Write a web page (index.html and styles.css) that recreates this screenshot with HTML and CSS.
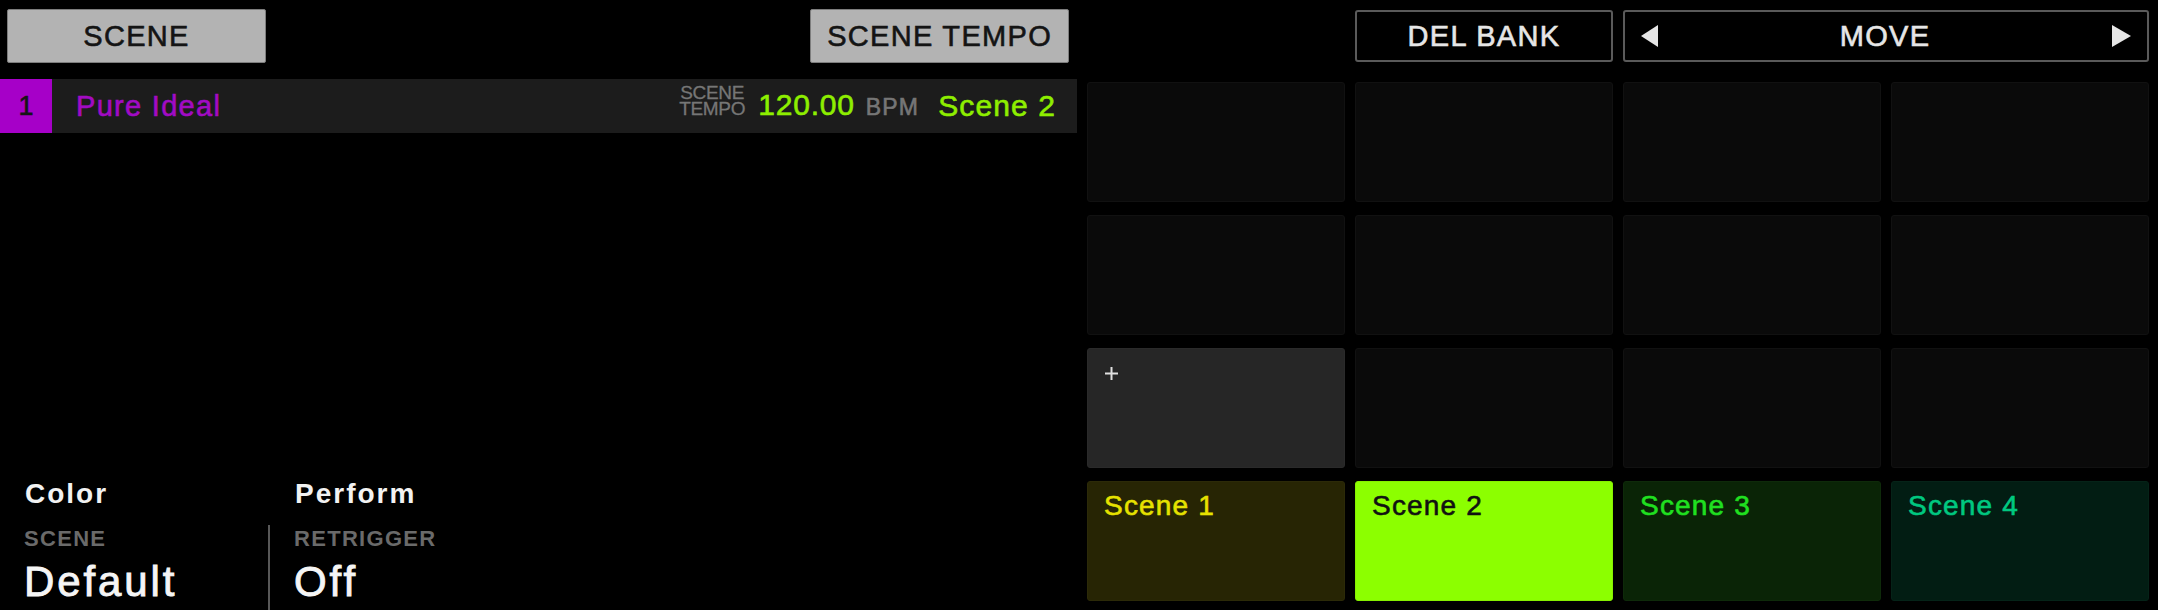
FILE: index.html
```html
<!DOCTYPE html>
<html>
<head>
<meta charset="utf-8">
<link rel="stylesheet" href="styles.css">
</head>
<body>
<div class="screen">

  <div class="left">
    <div class="left-head">
      <div class="btn btn-on">SCENE</div>
      <div class="btn btn-on tempo-btn">SCENE TEMPO</div>
    </div>

    <div class="scene-row">
      <span class="scene-num">1</span>
      <span class="scene-name">Pure Ideal</span>
      <span class="tempo-label"><span>SCENE</span><span>TEMPO</span></span>
      <span class="tempo">120.00<span class="bpm">BPM</span></span>
      <span class="scene-link">Scene 2</span>
    </div>

    <div class="params">
      <div class="param-col">
        <h3>Color</h3>
        <div class="param">
          <div class="param-label">SCENE</div>
          <div class="param-value">Default</div>
        </div>
      </div>
      <div class="param-col second">
        <h3>Perform</h3>
        <div class="param">
          <div class="param-label">RETRIGGER</div>
          <div class="param-value">Off</div>
        </div>
      </div>
    </div>
  </div>

  <div class="right">
    <div class="right-head">
      <div class="btn btn-line del">DEL BANK</div>
      <div class="btn btn-line move">
        <svg width="17" height="22" viewBox="0 0 17 22"><polygon points="17,0 17,22 0,11" fill="#e6e6e6"/></svg>
        <span class="move-text">MOVE</span>
        <svg width="19" height="22" viewBox="0 0 19 22"><polygon points="0,0 0,22 19,11" fill="#e6e6e6"/></svg>
      </div>
    </div>

    <div class="pads">
      <div class="pad"></div>
      <div class="pad"></div>
      <div class="pad"></div>
      <div class="pad"></div>

      <div class="pad"></div>
      <div class="pad"></div>
      <div class="pad"></div>
      <div class="pad"></div>

      <div class="pad pad-add">
        <svg width="15" height="15" viewBox="0 0 15 15"><path d="M7.5 1 V14 M1 7.5 H14" stroke="#e0e0e0" stroke-width="2"/></svg>
      </div>
      <div class="pad"></div>
      <div class="pad"></div>
      <div class="pad"></div>

      <div class="pad scene1">Scene 1</div>
      <div class="pad scene2">Scene 2</div>
      <div class="pad scene3">Scene 3</div>
      <div class="pad scene4">Scene 4</div>
    </div>
  </div>

</div>
</body>
</html>
```

FILE: styles.css
```css
body {
    margin: 0;
    background-color: #000;
    font-family: "Liberation Sans", Arial, sans-serif;
    overflow: hidden;
}
.screen {
    display: flex;
    width: 2158px;
    height: 610px;
    -webkit-text-stroke: 0.6px currentColor;
}

/* left side */
.left {
    width: 1077px;
    display: flex;
    flex-direction: column;
}
.left-head {
    display: grid;
    grid-template-columns: repeat(4, 259px);
    column-gap: 8.7px;
    padding: 9px 0 0 7px;
}
.btn {
    box-sizing: border-box;
    display: flex;
    align-items: center;
    justify-content: center;
    font-size: 29px;
    letter-spacing: 1.3px;
}
.btn-on {
    height: 54px;
    background-color: #b3b3b3;
    border: 1px solid #7d7d7d;
    border-radius: 2px;
    color: #141414;
}
.tempo-btn {
    grid-column: 4;
}
.scene-row {
    display: flex;
    align-items: center;
    height: 54px;
    margin-top: 16px;
    padding-right: 21px;
    background-color: #1c1c1c;
}
.scene-num {
    display: flex;
    align-items: center;
    justify-content: center;
    width: 52px;
    height: 54px;
    background-color: #a600c8;
    color: #151515;
    font-size: 27px;
}
.scene-name {
    margin-left: 24px;
    font-size: 29px;
    line-height: 1;
    letter-spacing: 1.3px;
    color: #a20bc4;
}
.tempo-label {
    display: flex;
    flex-direction: column;
    align-items: center;
    margin-left: auto;
    margin-right: 13px;
    margin-bottom: 10px;
    font-size: 19px;
    line-height: 16px;
    letter-spacing: -0.3px;
    color: #767676;
    -webkit-text-stroke: 0.3px currentColor;
}
.tempo {
    font-size: 30px;
    line-height: 30px;
    letter-spacing: 0.8px;
    color: #8eee00;
}
.bpm {
    margin-left: 11px;
    font-size: 23px;
    letter-spacing: 1.2px;
    color: #767676;
}
.scene-link {
    margin-left: 19px;
    font-size: 30px;
    line-height: 30px;
    letter-spacing: 1.1px;
    color: #8eee00;
}
.params {
    display: flex;
    margin-top: auto;
}
.param-col {
    width: 268px;
}
.param-col h3 {
    margin: 0 0 18px 0;
    padding-left: 25px;
    font-size: 28px;
    line-height: 27px;
    letter-spacing: 2px;
    color: #f2f2f2;
    -webkit-text-stroke: 0;
}
.param {
    padding: 3px 0 7px 24px;
}
.second h3 {
    padding-left: 27px;
}
.second .param {
    border-left: 2px solid #585858;
}
.param-label {
    margin-bottom: 11px;
    font-size: 22px;
    line-height: 22px;
    font-weight: bold;
    letter-spacing: 1.3px;
    color: #6a6a6a;
    -webkit-text-stroke: 0;
}
.param-value {
    font-size: 42px;
    line-height: 42px;
    letter-spacing: 2.9px;
    color: #f5f5f5;
    -webkit-text-stroke: 0.9px currentColor;
}

/* right side */
.right {
    width: 1062px;
    margin-left: 10px;
    padding-top: 10px;
}
.right-head {
    display: grid;
    grid-template-columns: repeat(4, 258px);
    column-gap: 10px;
}
.btn-line {
    height: 52px;
    border: 2px solid #5a5a5a;
    border-radius: 3px;
    color: #e6e6e6;
}
.del {
    grid-column: 2;
}
.move {
    grid-column: 3 / span 2;
    justify-content: space-between;
    padding: 0 16px 0 16px;
}
.move-text {
    flex: 1;
    text-align: center;
}
.pads {
    display: grid;
    grid-template-columns: repeat(4, 258px);
    grid-template-rows: repeat(4, 120px);
    column-gap: 10px;
    row-gap: 13px;
    margin-top: 20px;
}
.pad {
    box-sizing: border-box;
    padding: 10px 16px;
    border: 1px solid #111;
    border-radius: 3px;
    background-color: #0a0a0a;
    font-size: 28px;
    line-height: 28px;
    letter-spacing: 1.2px;
}
.pad-add {
    padding-top: 17px;
    background-color: #262626;
    border-color: #2a2a2a;
}
.pad-add svg {
    display: block;
}
.scene1 {
    background-color: #272504;
    border-color: #2c2a08;
    color: #e6e200;
}
.scene2 {
    background-color: #8cff00;
    border-color: #86f000;
    color: #111;
}
.scene3 {
    background-color: #0a2406;
    border-color: #0e2a0a;
    color: #20e020;
}
.scene4 {
    background-color: #021d13;
    border-color: #052318;
    color: #00c880;
}
```
